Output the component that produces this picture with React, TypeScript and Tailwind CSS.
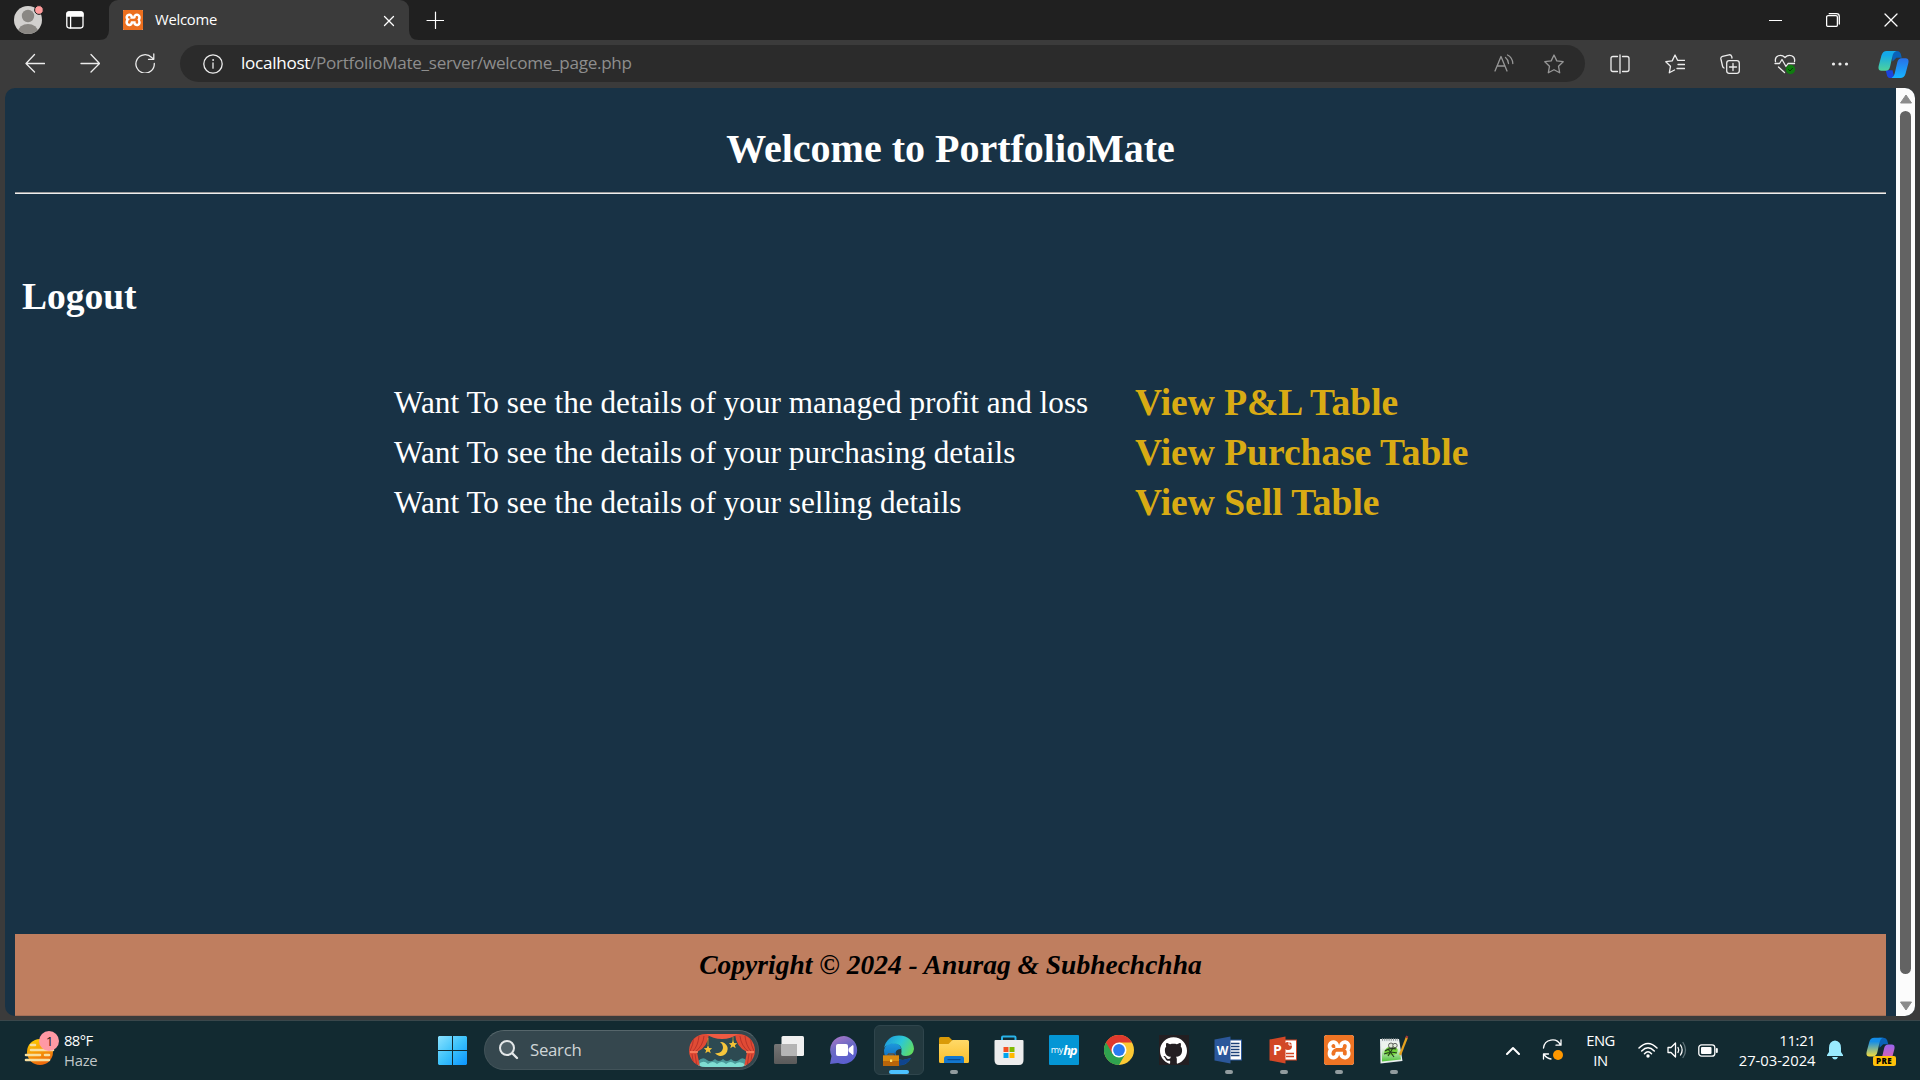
import React from "react";
import { SiXampp, SiGithub } from "react-icons/si";

type IconProps = { children: React.ReactNode; w?: number; h?: number; className?: string };

function Icon({ children, w = 20, h = 20, className = "" }: IconProps) {
  return (
    <svg
      width={w}
      height={h}
      viewBox={`0 0 ${w} ${h}`}
      fill="none"
      stroke="currentColor"
      strokeWidth={1.3}
      strokeLinecap="round"
      strokeLinejoin="round"
      className={`shrink-0 ${className}`}
    >
      {children}
    </svg>
  );
}

const STAR = "M10 1 L12.8 6.9 L19.2 7.7 L14.5 12.2 L15.7 18.8 L10 15.7 L4.3 18.8 L5.5 12.2 L0.8 7.7 L7.2 6.9 Z";

function TabStrip() {
  return (
    <div className="flex h-10 shrink-0 items-stretch bg-[#202020] text-white">
      <div className="flex w-[109px] items-center">
        <Icon w={32} h={30} className="ml-[13px]">
          <clipPath id="avatar"><circle cx="15" cy="15" r="14" /></clipPath>
          <circle cx="15" cy="15" r="14" fill="#d2d0ce" stroke="none" />
          <g clipPath="url(#avatar)" fill="#8a8783" stroke="none">
            <circle cx="15" cy="11" r="6.2" />
            <ellipse cx="15" cy="27" rx="10" ry="8" />
          </g>
          <circle cx="26" cy="5" r="4.4" fill="#ff9c9c" stroke="#202020" strokeWidth="1" />
        </Icon>
        <Icon w={18} h={18} className="ml-[21px]">
          <rect x="0.8" y="0.8" width="16.2" height="16.2" rx="2.4" />
          <path d="M1 5 V3 Q1 1 3 1 H15 Q17 1 17 3 V5 Z" fill="white" />
          <path d="M4.6 5 V17" />
        </Icon>
      </div>
      <div className="relative flex w-[300px] items-center rounded-t-[9px] bg-[#3b3b3b]">
        <svg className="absolute bottom-0 -left-2.5" width="10" height="10"><path d="M10 0 V10 H0 Q10 10 10 0" fill="#3b3b3b" /></svg>
        <svg className="absolute bottom-0 -right-2.5" width="10" height="10"><path d="M0 0 V10 H10 Q0 10 0 0" fill="#3b3b3b" /></svg>
        <div className="ml-[14px] size-5 overflow-hidden rounded-[1px] bg-white">
          <SiXampp className="size-5 scale-105 text-[#ec6f1e]" />
        </div>
        <span className="ml-[12px] flex-1 pb-px text-[14.8px] tracking-[-0.25px]">Welcome</span>
        <Icon w={12} h={12} className="mr-[14px] mt-px">
          <path d="M1.5 1.5 L10.5 10.5 M10.5 1.5 L1.5 10.5" />
        </Icon>
      </div>
      <div className="flex flex-1 items-center">
        <Icon w={18} h={18} className="ml-[17px] -mt-px"><path d="M9.5 1 V17.5 M1 9.5 H17.5" strokeWidth="1.2" /></Icon>
      </div>
      <div className="mr-[22px] flex items-center gap-[44px]">
        <Icon w={13} h={14} className="-mt-px"><path d="M0 7.5 H13" strokeWidth="1.1" /></Icon>
        <Icon w={14} h={14} className="-mt-px">
          <rect x="0.6" y="2.6" width="10.8" height="10.8" rx="1.5" />
          <path d="M3.2 .7 H10.5 Q13.3 .7 13.3 3.5 V11" />
        </Icon>
        <Icon w={14} h={14} className="-mt-px"><path d="M1 1 L13 13 M13 1 L1 13" /></Icon>
      </div>
    </div>
  );
}

function Cell({ children }: { children: React.ReactNode }) {
  return <div className="flex w-[55px] shrink-0 items-center justify-center">{children}</div>;
}

function Toolbar() {
  return (
    <div className="flex h-12 shrink-0 items-stretch bg-[#3b3b3b] pl-[7px] text-[#ececec]">
      <div className="flex pb-[2px]">
        <Cell><Icon><path d="M9.5 1.5 L1 10.5 L9.5 19 M1 10.5 H19.5" /></Icon></Cell>
        <Cell><Icon><path d="M11 1.5 L19.5 10.5 L11 19 M19.5 10.5 H1" /></Icon></Cell>
        <Cell>
          <Icon>
            <path d="M19.3 10.5 A9.2 9.2 0 1 1 16.7 4.5 L18.8 6 M18.8 1 V6.3 H13.5" />
          </Icon>
        </Cell>
      </div>
      <div className="mt-[5px] ml-[8px] flex h-[37px] w-[1405px] items-center rounded-full bg-[#2b2b2b]">
        <Icon className="ml-[23px]">
          <circle cx="10" cy="10" r="9.2" />
          <path d="M10 9 V14.2" />
          <circle cx="10" cy="6" r=".5" fill="currentColor" strokeWidth=".8" />
        </Icon>
        <div className="ml-[18px] flex-1 pb-px text-[17.1px] tracking-[-0.28px] text-[#8e8e8e]">
          <span className="text-white">localhost</span>/PortfolioMate_server/welcome_page.php
        </div>
        <Icon className="mr-[30px] text-[#979797]">
          <path d="M1 17 L7 2.5 L13 17 M3 12 H11" />
          <path d="M11.5 3.5 Q14.2 5.5 14.5 9.5 M13.5 1 Q18.5 3.5 18.8 9.5" />
        </Icon>
        <Icon className="mr-[21px] text-[#979797]"><path d={STAR} /></Icon>
      </div>
      <div className="ml-[7px] flex">
        <Cell>
          <Icon>
            <path d="M7.5 2.5 H3 Q1 2.5 1 4.5 V15.5 Q1 17.5 3 17.5 H7.5 M12.5 2.5 H17 Q19 2.5 19 4.5 V15.5 Q19 17.5 17 17.5 H12.500 M10 .8 V19.2" />
          </Icon>
        </Cell>
        <Cell>
          <Icon>
            <path d="M19.5 6.3 H12.6 L10 1 L7.2 6.9 L.8 7.7 L5.5 12.2 L4.3 18.8 L9.5 16 M13 10.5 H19.5 M12 14.5 H19.5" />
          </Icon>
        </Cell>
        <Cell>
          <Icon>
            <rect x="6.7" y="6.7" width="12.6" height="12.6" rx="2.5" />
            <path d="M13 9.5 V16.5 M9.5 13 H16.5 M4 14 Q2.8 13.5 2.5 12 L.9 5 Q.5 3 2.5 2.3 L9 .8 Q11 .5 11.7 2.5 L12 4" />
          </Icon>
        </Cell>
        <Cell>
          <Icon w={22} h={22}>
            <path d="M1.5 8.500 C.3 2.500 7.200 .5 11 4.500 C14.800 .5 21.700 2.500 20.500 8.500 M1 10.500 H5.500 L8 6.500 L12 13.500 L14 10.500 H20.500 M4.500 14 L10.500 19.500" />
            <circle cx="16.5" cy="16.5" r="4.7" fill="#107c10" stroke="none" />
            <path d="M14.5 16.5 L16 18 L18.5 15.3" stroke="#063c06" strokeWidth="1" />
          </Icon>
        </Cell>
        <Cell>
          <Icon w={18} h={4}>
            <g fill="currentColor" stroke="none"><circle cx="2.5" cy="2" r="1.6" /><circle cx="9" cy="2" r="1.6" /><circle cx="15.5" cy="2" r="1.6" /></g>
          </Icon>
        </Cell>
        <div className="ml-px flex w-[50px] items-center justify-center">
          <CopilotMark id="tb" a="#14a9e8" b="#4fd39b" c="#2870e8" d="#16b5ff" size={31} />
        </div>
      </div>
    </div>
  );
}

type CopilotProps = { id: string; a: string; b: string; c: string; d: string; size: number };

function CopilotMark({ id, a, b, c, d, size }: CopilotProps) {
  return (
    <svg width={size} height={size} viewBox="0 0 32 32" className="shrink-0">
      <defs>
        <linearGradient id={`${id}l`} x1="0" y1="0" x2="0" y2="1"><stop offset="0.2" stopColor={a} /><stop offset="1" stopColor={b} /></linearGradient>
        <linearGradient id={`${id}r`} x1="0" y1="0" x2="0" y2="1"><stop offset="0" stopColor={c} /><stop offset="1" stopColor={d} /></linearGradient>
      </defs>
      <path d="M14 2 H19.5 Q22.500 2 23.500 5 L24.500 9 H19 L15 13 Z" fill="#0a62b8" />
      <path d="M8 22 H15 L17 30 H13 Q10 30 9.2 27 Z" fill="#1a45dc" />
      <path d="M9 2 H19 Q15.8 3 15 7 L12.5 18 Q11.500 22.500 8 22.500 H3.5 Q-.5 22.500 .8 17 L3.6 6.500 Q5 2 9 2 Z" fill={`url(#${id}l)`} />
      <path d="M23 30 H14 Q16.5 29 17.3 25 L20 13.500 Q21 9.500 24.500 9.500 H28.500 Q32.500 9.500 31.200 15 L28.400 25.500 Q27 30 23 30 Z" fill={`url(#${id}r)`} />
    </svg>
  );
}

const ROWS = [
  ["Want To see the details of your managed profit and loss", "View P&L Table"],
  ["Want To see the details of your purchasing details", "View Purchase Table"],
  ["Want To see the details of your selling details", "View Sell Table"],
];

function Page() {
  return (
    <div className="flex min-h-0 flex-1 bg-[#3b3b3b] px-[5px] pb-[4px]">
      <div className="flex flex-1 overflow-hidden rounded-[10px] bg-[#183245]">
        <main className="flex flex-1 flex-col px-[10px] font-['Liberation_Serif',serif] text-white">
          <h1 className="mt-[38px] text-center text-[40px] leading-[46px] font-bold">Welcome to PortfolioMate</h1>
          <div className="mt-[20px] h-[2px] border-t border-[#9a9a9a] bg-[#eeeeee]" />
          <a className="mt-[81px] ml-[7px] text-[37.5px] leading-[44px] font-bold">Logout</a>
          <div className="mt-[59px] ml-[379px] grid auto-rows-[50px] grid-cols-[741px_auto] items-center">
            {ROWS.map(([label, link]) => (
              <React.Fragment key={link}>
                <span className="text-[31.25px] leading-[50px]">{label}</span>
                <a className="text-[37.5px] leading-[50px] font-bold text-[#d8ab14]">{link}</a>
              </React.Fragment>
            ))}
          </div>
          <footer className="mt-auto h-[82px] border-b border-[#a56f58] bg-[#bf7e5f] pt-[14px] text-center text-[27.5px] leading-[34px] font-bold text-black italic">
            Copyright © 2024 - Anurag &amp; Subhechchha
          </footer>
        </main>
        <div className="flex w-[19px] flex-col items-center bg-[#fcfcfc] pt-[6px] pb-[5px]">
          <svg width="12" height="10"><path d="M6 1 L11.5 9 H.5 Z" fill="#8b8b8b" stroke="#8b8b8b" strokeLinejoin="round" /></svg>
          <div className="mt-[7px] mb-[27px] w-[11px] flex-1 rounded-full bg-[#636363]" />
          <svg width="12" height="10"><path d="M6 9 L.5 1 H11.5 Z" fill="#8b8b8b" stroke="#8b8b8b" strokeLinejoin="round" /></svg>
        </div>
      </div>
    </div>
  );
}

function SearchArt() {
  return (
    <svg width="66" height="33" viewBox="0 0 66 33">
      <clipPath id="pill"><rect width="66" height="33" rx="16.5" /></clipPath>
      <g clipPath="url(#pill)">
        <rect width="66" height="33" fill="#2d4a52" />
        <path d="M9 27 Q14 22 18 26 Q22 29 26 25 Q30 29 34 25 Q38 29 42 25 Q46 29 50 26 Q54 22 58 27 V33 H9 Z" fill="#4b9a9a" />
        <path d="M9 31 Q14 25 19 30 Q24 26 28 30 Q33 26 37 30 Q42 26 46 30 Q51 26 57 31 V33 H9 Z" fill="#7fded2" />
        <path d="M0 0 H20 Q19 13 8 18 L11 33 H0 Z M66 0 H46 Q47 13 58 18 L55 33 H66 Z" fill="#e04b35" />
        <path d="M17 0 H49 Q42 5 33 5 Q24 5 17 0 Z" fill="#ef5a42" />
        <path d="M5 2 Q4 12 1 17 M10 2 Q9 12 4 17 M15 2 Q14 12 6 18 M3 20 L5 33 M6 20 L8 33 M61 2 Q62 12 65 17 M56 2 Q57 12 62 17 M51 2 Q52 12 60 18 M63 20 L61 33 M60 20 L58 33" stroke="#b8332a" fill="none" strokeWidth="1" />
        <path d="M1 18 H9 M57 18 H65" stroke="#ff8a65" strokeWidth="1.5" />
        <path d="M31 8 A7 7 0 1 1 26 19 Q33 20 34 14 Q34 10 31 8 Z" fill="#f6c63c" />
        <path d="M19 4 V11 M44 3 V7" stroke="#c79a35" strokeWidth=".8" />
        <path d="M19 11 l1.2 3 3 .2 -2.3 2 .8 3 -2.7 -1.7 -2.7 1.7 .8 -3 -2.3 -2 3 -.2z M44 6 l1.2 3 3 .2 -2.3 2 .8 3 -2.7 -1.7 -2.7 1.7 .8 -3 -2.3 -2 3 -.2z" fill="#f3bf35" />
      </g>
    </svg>
  );
}

type AppProps = { children: React.ReactNode; active?: boolean; running?: boolean };

function TaskApp({ children, active, running }: AppProps) {
  return (
    <div className="flex w-[55px] shrink-0 justify-center">
      <div className={`relative flex size-[50px] items-center justify-center rounded-[6px] ${active ? "border border-[#2f454c] bg-[#23393f]" : ""}`}>
        {children}
        {active && <i className="absolute bottom-0 h-1 w-5 rounded-full bg-[#4cc2ff]" />}
        {running && <i className="absolute bottom-px h-1 w-2 rounded-full bg-[#929c9f]" />}
      </div>
    </div>
  );
}

function OfficeIcon({ letter, color, dark, chart }: { letter: string; color: string; dark: string; chart?: boolean }) {
  return (
    <svg width="30" height="30" viewBox="0 0 30 30">
      <rect x="14" y="5" width="13.500" height="20" fill="white" stroke={color} />
      {chart ? (
        <>
          <circle cx="19" cy="11" r="4" fill={color} />
          <path d="M20 6 V10 H24" stroke="white" fill="none" />
          <path d="M17 18.5 H25 M17 21.5 H25" stroke={color} strokeWidth="1.5" />
        </>
      ) : (
        <path d="M17 8.5 H25.5 M17 11.5 H25.5 M17 14.5 H25.5 M17 17.5 H25.5 M17 20.5 H25.5" stroke={dark} strokeWidth="1.3" />
      )}
      <path d="M.5 4.5 L16.500 1.5 V28.5 L.5 25.5 Z" fill={color} />
      <text x="8.500" y="20" textAnchor="middle" fill="white" fontSize={chart ? "14" : "12"} fontWeight="700" fontFamily="Open Sans, sans-serif">{letter}</text>
    </svg>
  );
}

function Taskbar() {
  return (
    <div className="flex h-[60px] shrink-0 items-center border-t border-[#3a474b] bg-[#122a31] pb-px text-white">
      <div className="flex w-[438px] items-center pl-[24px]">
        <svg width="36" height="36" viewBox="0 0 36 36" className="-mt-1">
          <defs><linearGradient id="sun" x1="0" y1="0" x2=".4" y2="1"><stop offset="0" stopColor="#ffd500" /><stop offset="1" stopColor="#ef6c0c" /></linearGradient></defs>
          <circle cx="16" cy="22" r="13" fill="url(#sun)" />
          <path d="M7 15 H11 M7 20 H29 M2 25 H16 M21 25 H25 M2 30 H25" stroke="#f7dfa0" strokeWidth="2.6" strokeLinecap="round" />
          <circle cx="25" cy="11" r="10" fill="#ff99a4" />
          <text x="25.5" y="16" textAnchor="middle" fontSize="13.5" fill="#222" fontFamily="Open Sans, sans-serif">1</text>
        </svg>
        <div className="ml-[4px] pb-px text-[14.8px] leading-[20px] tracking-[-0.6px]">
          <div>88°F</div>
          <div className="tracking-[-0.25px] text-[#c0c7c9]">Haze</div>
        </div>
      </div>
      <svg width="29" height="29" viewBox="0 0 29 29">
        <defs><linearGradient id="win" x1="0" y1="0" x2="29" y2="29" gradientUnits="userSpaceOnUse"><stop offset="0" stopColor="#8be2ff" /><stop offset=".5" stopColor="#3cc2fb" /><stop offset="1" stopColor="#0a94ff" /></linearGradient></defs>
        <path d="M1 0 H14 V14 H0 V1 Z M15 0 H28 L29 1 V14 H15 Z M0 15 H14 V29 H1 L0 28 Z M15 15 H29 V28 L28 29 H15 Z" fill="url(#win)" />
      </svg>
      <div className="ml-[17px] flex h-10 w-[275px] items-center rounded-full border border-[#425359] border-t-[#56666b] bg-[#35474e]">
        <Icon w={20} h={20} className="ml-[14px] text-[#e4e8e9]">
          <circle cx="8" cy="8" r="7" strokeWidth="2" fill="#4f6067" />
          <path d="M13.5 13.5 L18 18" strokeWidth="2.4" />
        </Icon>
        <span className="ml-[11px] flex-1 text-[16.8px] tracking-[-0.28px] text-[#cfd5d7]">Search</span>
        <div className="mr-[3px]"><SearchArt /></div>
      </div>
      <div className="ml-[2px] flex">
        <TaskApp>
          <svg width="30" height="30" viewBox="0 0 30 30">
            <defs><linearGradient id="tv" x1="0" y1="0" x2="0" y2="1"><stop offset="0" stopColor="#757575" /><stop offset="1" stopColor="#5a5a5a" /></linearGradient></defs>
            <rect x="0" y="9" width="23" height="20" rx="1.5" fill="url(#tv)" />
            <rect x="7.5" y="1" width="22.5" height="20" rx="1.5" fill="#f0f0f0" />
            <rect x="7.5" y="9" width="15.5" height="12" fill="#b5b5b5" />
          </svg>
        </TaskApp>
        <TaskApp>
          <svg width="30" height="30" viewBox="0 0 30 30">
            <defs><linearGradient id="chat" x1="0" y1="0" x2=".4" y2="1"><stop offset="0" stopColor="#b479c8" /><stop offset=".5" stopColor="#6c6ac4" /><stop offset="1" stopColor="#5b5fd0" /></linearGradient></defs>
            <path d="M15 1 A14 14 0 1 1 9 28 L1 29 L2.5 21 A14 14 0 0 1 15 1 Z" fill="url(#chat)" />
            <rect x="7" y="9" width="12" height="12" rx="2" fill="white" />
            <path d="M20 13.5 L24 10.5 V19.5 L20 16.5 Z" fill="white" stroke="white" strokeLinejoin="round" />
          </svg>
        </TaskApp>
        <TaskApp active>
          <svg width="31" height="31" viewBox="0 0 31 31">
            <defs>
              <linearGradient id="e1" x1="0" y1=".3" x2="1" y2=".7"><stop offset="0" stopColor="#1e9bdc" /><stop offset=".5" stopColor="#2cc7d6" /><stop offset="1" stopColor="#63dd5c" /></linearGradient>
              <linearGradient id="e2" x1="0" y1="0" x2="0" y2="1"><stop offset="0" stopColor="#1d9ade" /><stop offset="1" stopColor="#0c55ad" /></linearGradient>
            </defs>
            <path d="M1 15 Q3 7 11 8 Q18 9 18 14 Q13 14 12.5 18 Q13 25 20 25 L28 23 Q24 31 15 30.5 Q1 29 1 15 Z" fill="url(#e2)" />
            <path d="M12 17 Q11 26 20 25 L28 23 Q23 31 16 30 Q8 26 12 17 Z" fill="#10458f" />
            <path d="M1 13 Q4 .5 16 .5 Q30 1 31 14 Q30 21 23 21 Q17 21 18.5 17 Q20 8 9 8.5 Q3 9.5 1 13 Z" fill="url(#e1)" />
            <rect x="0" y="20.500" width="16" height="10.500" fill="#b8650a" />
            <rect x="0" y="20.500" width="16" height="5.500" fill="#d98a10" />
            <path d="M5 20 V19 H11 V20" stroke="#7a4305" fill="none" />
            <rect x="7" y="24.5" width="2.2" height="2.5" fill="#ffe070" />
          </svg>
        </TaskApp>
        <TaskApp running>
          <svg width="30" height="30" viewBox="0 0 30 30">
            <defs><linearGradient id="fold" x1="0" y1="0" x2="0" y2="1"><stop offset="0" stopColor="#ffd968" /><stop offset="1" stopColor="#fbbf2c" /></linearGradient></defs>
            <path d="M0 3.5 Q0 2 1.5 2 H10 L13 5 V12 H0 Z" fill="#d99a08" />
            <path d="M0 9 H9.5 L13.5 5 H28.5 Q30 5 30 6.5 V26.5 Q30 28 28.5 28 H1.5 Q0 28 0 26.5 Z" fill="url(#fold)" />
            <path d="M5 28 V23.5 Q5 21 7.5 21 H22.5 Q25 21 25 23.5 V28 Z" fill="#1377cf" />
            <path d="M9 24.7 H21" stroke="#0a4c92" strokeWidth="1.3" strokeLinecap="round" />
          </svg>
        </TaskApp>
        <TaskApp>
          <svg width="30" height="30" viewBox="0 0 30 30">
            <path d="M8 6 V2.5 Q8 1.5 9 1.5 H20.5 Q21.5 1.5 21.5 2.5 V6" stroke="#29b4ea" strokeWidth="2" fill="none" />
            <path d="M1.5 5 H28.5 Q29.5 5 29.5 6 V25 Q29.5 30 25 30 H5 Q.5 30 .5 25 V6 Q.5 5 1.5 5 Z" fill="#ededed" />
            <path d="M9.5 12 h5 v5 h-5z" fill="#f25022" /><path d="M15.5 12 h5 v5 h-5z" fill="#7fba00" />
            <path d="M9.5 18 h5 v5 h-5z" fill="#00a4ef" /><path d="M15.5 18 h5 v5 h-5z" fill="#ffb900" />
          </svg>
        </TaskApp>
        <TaskApp>
          <div className="flex size-[30px] items-center justify-center rounded-[1px] bg-[#0496d5] leading-[20px] text-white">
            <span className="text-[9px] tracking-[-0.2px]">my</span>
            <span className="text-[13px] font-bold tracking-[-1.2px] italic">hp</span>
          </div>
        </TaskApp>
        <TaskApp>
          <svg width="30" height="30" viewBox="0 0 30 30">
            <circle cx="15" cy="15" r="15" fill="#fcc934" />
            <path d="M15 15 L2 7.5 A15 15 0 0 0 15 30 L21.5 18.7 Z" fill="#2fa24f" />
            <path d="M15 15 L8.5 18.7 L2 7.5 A15 15 0 0 1 28 7.5 H15 Z" fill="#e0392d" />
            <circle cx="15" cy="15" r="7.5" fill="white" />
            <circle cx="15" cy="15" r="5.9" fill="#2b7bf0" />
          </svg>
        </TaskApp>
        <TaskApp>
          <div className="flex size-[30px] items-center justify-center bg-[#231f22]"><SiGithub className="size-[27px] text-white" /></div>
        </TaskApp>
        <TaskApp running><OfficeIcon letter="W" color="#2b579a" dark="#1d4179" /></TaskApp>
        <TaskApp running><OfficeIcon letter="P" color="#d24726" dark="#a33" chart /></TaskApp>
        <TaskApp running>
          <div className="size-[30px] overflow-hidden rounded-[3px] bg-white"><SiXampp className="size-[30px] scale-105 text-[#ee7424]" /></div>
        </TaskApp>
        <TaskApp running>
          <svg width="30" height="30" viewBox="0 0 30 30">
            <defs><linearGradient id="np" x1="0" y1="0" x2="0" y2="1"><stop offset=".3" stopColor="#eef4ee" /><stop offset="1" stopColor="#4fc436" /></linearGradient></defs>
            <path d="M1 4 H20 L23.5 26 L1.5 28.5 Z" fill="#e9eeee" />
            <path d="M2.5 7 H20 L22 24.5 L3 26.5 Z" fill="url(#np)" />
            <path d="M3 4.500 H19" stroke="#8b9495" strokeWidth="2.5" strokeDasharray="1 1.2" />
            <path d="M5 17 Q8 10 16 12 Q21 14 17 19 Q11 22 6 19 Z" fill="#74d33c" />
            <path d="M6 16 Q11 12 17 14 M5 19 Q12 16 18 18 M9 14 L15 22 M14 13 L9 21" stroke="#223c1c" strokeWidth="1.1" fill="none" />
            <circle cx="12" cy="10.5" r="2.5" fill="#dfe9d8" stroke="#444" strokeWidth=".8" /><circle cx="16" cy="10.5" r="2.2" fill="#dfe9d8" stroke="#444" strokeWidth=".8" />
            <path d="M28 2 L21 20" stroke="#e4a11f" strokeWidth="2.2" />
            <path d="M28.300 1 L27.500 3" stroke="#a3353a" strokeWidth="2.2" />
          </svg>
        </TaskApp>
      </div>
      <div className="flex flex-1 items-center">
        <Icon w={14} h={9} className="ml-[84.5px]"><path d="M1 8 L7 2 L13 8" strokeWidth="2" /></Icon>
        <Icon w={22} h={22} className="ml-[22px]">
          <path d="M1.5 9 A9 9 0 0 1 18.5 6 M19 1 V6.2 H14 M1.5 20 V15 H6.5 M2 15.5 Q5 19.5 9 20" />
          <circle cx="16" cy="16" r="5" fill="#ff9800" stroke="none" />
        </Icon>
        <div className="ml-[20px] w-[34px] text-center text-[14.8px] leading-5 tracking-[-0.5px]">
          <div>ENG</div>
          <div>IN</div>
        </div>
        <Icon w={20} h={16} className="ml-[20px]">
          <path d="M1 6 Q10 -3 19 6 M3.7 9 Q10 2.5 16.3 9 M6.5 11.7 Q10 8 13.5 11.7" strokeWidth="1.5" />
          <circle cx="10" cy="14" r="1.7" fill="white" stroke="none" />
        </Icon>
        <Icon w={20} h={18} className="ml-[9px]">
          <path d="M1 6.5 H4 L8.5 2 V16 L4 11.5 H1 Z M11 6.5 Q12.5 9 11 11.5 M13.5 4 Q16.8 9 13.5 14" />
          <path d="M16 1.5 Q21 9 16 16.5" stroke="#61747a" />
        </Icon>
        <Icon w={20} h={13} className="ml-[11px]">
          <rect x=".8" y=".8" width="16" height="11.4" rx="2.8" />
          <rect x="3" y="3" width="10.5" height="7" rx="1" fill="white" stroke="none" />
          <path d="M18.8 5 V8" strokeWidth="2" />
        </Icon>
        <div className="ml-[10px] w-[88px] text-right text-[14.8px] leading-5 tracking-[-0.05px] whitespace-nowrap">
          <div className="tracking-[-0.3px]">11:21</div>
          <div>27-03-2024</div>
        </div>
        <svg width="18" height="20" viewBox="0 0 18 20" className="ml-[10px]">
          <path d="M9 .5 Q15 1 15 8 V12 L17 15 V16 H1 V15 L3 12 V8 Q3 1 9 .5 Z M6 17 H12 Q11 19.5 9 19.5 Q7 19.5 6 17 Z" fill="#99ebff" />
        </svg>
        <div className="relative ml-[22px]">
          <CopilotMark id="tray" a="#148de8" b="#f4dc3c" c="#9a64ee" d="#f0609a" size={29} />
          <span className="absolute top-[20px] left-[7px] flex h-[10px] w-[23px] items-center justify-center rounded-[2px] bg-[#ffc10a] text-[8px] leading-[10px] font-extrabold tracking-[0.3px] text-black">PRE</span>
        </div>
      </div>
    </div>
  );
}

export default function App() {
  return (
    <div className="flex h-[1080px] w-[1920px] flex-col overflow-hidden bg-[#3b3b3b] font-['Open_Sans',sans-serif]">
      <TabStrip />
      <Toolbar />
      <Page />
      <Taskbar />
    </div>
  );
}
